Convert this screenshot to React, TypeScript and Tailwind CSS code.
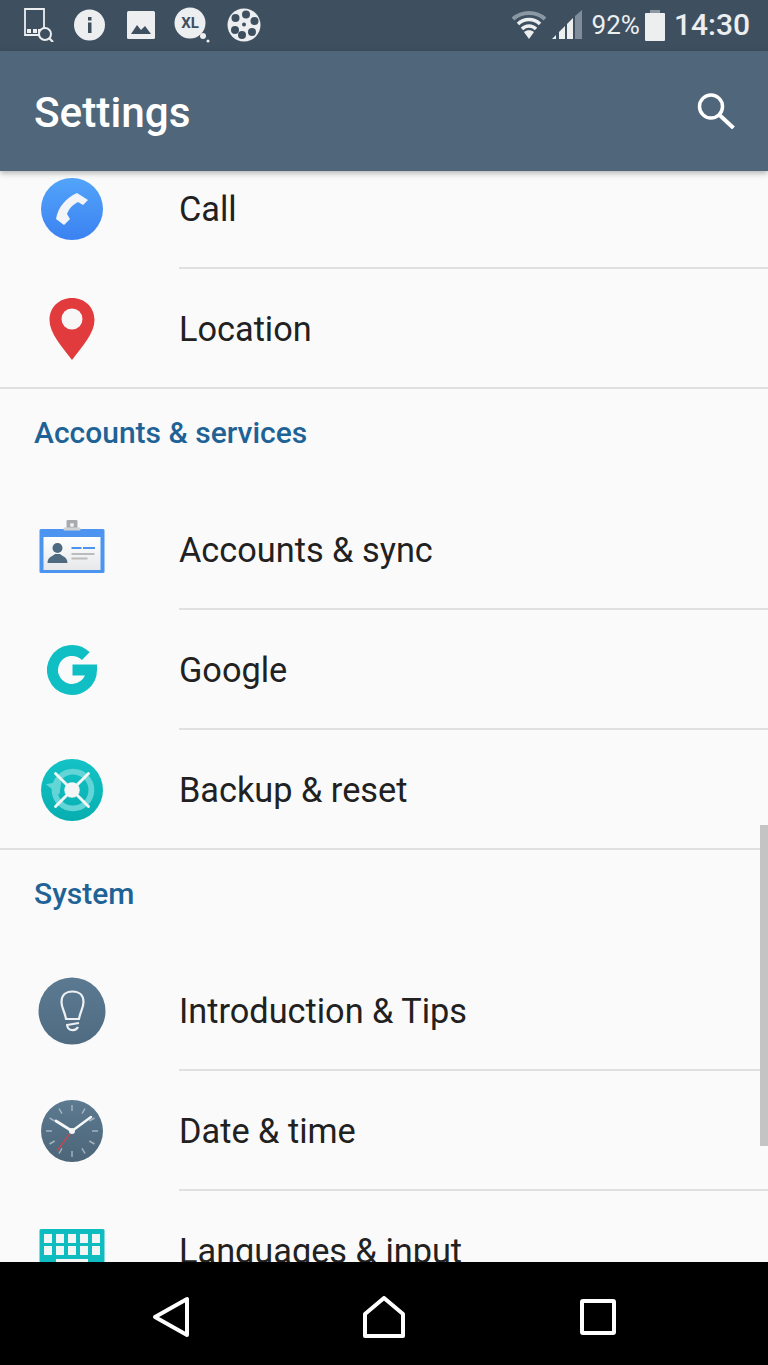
import React from "react";
import { ReactNode } from "react";

function Row({ icon, label, divider = true }: { icon: ReactNode; label: string; divider?: boolean }) {
  return (
    <div className="flex h-[120px] items-stretch">
      <div className="flex w-[144px] shrink-0 items-center justify-center">{icon}</div>
      <div
        className={
          divider
            ? "ml-[35px] flex flex-1 items-center border-b-2 border-[#e0e0e0] pt-[4px] text-[34.3px] text-[#212121]"
            : "ml-[35px] flex flex-1 items-center pt-[2px] text-[34.3px] text-[#212121]"
        }
      >
        {label}
      </div>
    </div>
  );
}

function SectionHeader({ title }: { title: string }) {
  return (
    <div className="-mt-[2px] h-[103px] border-t-2 border-[#e0e0e0] pl-[34px] pt-[26px] text-[30px] leading-[36px] font-medium text-[#1f6396]">
      {title}
    </div>
  );
}

const CallIcon = () => (
  <svg width="62" height="62" viewBox="0 0 62 62">
    <defs>
      <linearGradient id="call" x1="0" y1="0" x2="0" y2="1">
        <stop offset="0" stopColor="#52a4f9" />
        <stop offset="1" stopColor="#3b82f2" />
      </linearGradient>
    </defs>
    <circle cx="31" cy="31" r="31" fill="url(#call)" />
    <path d="M36 15 L47 22 L42 27 L37 24 C31 27 28 31 26 36 L29 41 L23 47 L15 41 C17 29 25 20 36 15 Z" fill="#f2f4f7" />
  </svg>
);

const PinIcon = () => (
  <svg width="46" height="64" viewBox="0 0 46 64">
    <path d="M23 1 C10 1 0.500 10.500 0.500 23 C0.500 36 13 50 23 63 C33 50 45.500 36 45.500 23 C45.500 10.500 36 1 23 1 Z" fill="#e23b3d" />
    <circle cx="23" cy="22" r="10.500" fill="#f7f7f7" />
  </svg>
);

const AccountsIcon = () => (
  <svg className="-mt-[6px]" width="66" height="54" viewBox="0 0 66 54">
    <defs>
      <linearGradient id="card" x1="0" y1="0" x2="0" y2="1">
        <stop offset="0" stopColor="#ffffff" />
        <stop offset="1" stopColor="#e6e8ea" />
      </linearGradient>
    </defs>
    <rect x="27.500" y="0" width="11" height="13" rx="1" fill="#a8abae" />
    <circle cx="33" cy="5" r="2" fill="#eeeeee" />
    <rect x="0.500" y="9" width="65" height="44" rx="1.500" fill="#4d94f0" />
    <rect x="24.500" y="7.500" width="17" height="3" rx="1" fill="#d0d3d6" />
    <rect x="4.500" y="17" width="57" height="33" fill="url(#card)" />
    <circle cx="18.500" cy="28" r="5" fill="#4e6a80" />
    <path d="M8.500 43 C8.500 37 14 36 16 34 L21 34 C23 36 28.500 37 28.500 43 Z" fill="#4e6a80" />
    <rect x="32.500" y="27" width="10" height="2" fill="#4d94f0" />
    <rect x="44" y="27" width="12" height="2" fill="#4d94f0" />
    <rect x="32.500" y="33" width="23" height="2" fill="#bcbcbc" />
    <rect x="32.500" y="37.500" width="16" height="2" fill="#bcbcbc" />
  </svg>
);

const GoogleIcon = () => (
  <svg width="50" height="52" viewBox="0 0 50 52">
    <path d="M38.800 12.200 A19.500 19.500 0 1 0 44.500 26 L25.500 26" fill="none" stroke="#10bfc4" strokeWidth="11" />
  </svg>
);

const BackupIcon = () => (
  <svg width="62" height="62" viewBox="0 0 64 64">
    <defs>
      <linearGradient id="backup" x1="0" y1="0" x2="0" y2="1">
        <stop offset="0" stopColor="#14c3c6" />
        <stop offset="1" stopColor="#07aeb0" />
      </linearGradient>
    </defs>
    <circle cx="32" cy="32" r="32" fill="url(#backup)" />
    <circle cx="33" cy="32" r="19" fill="none" stroke="#63d5d6" strokeWidth="6" />
    <path d="M5 26 L21 23 L19 37 Z" fill="#63d5d6" />
    <path d="M15 15 L49 49 M49 15 L15 49" stroke="#f4f6f6" strokeWidth="3" strokeLinecap="round" />
    <circle cx="32" cy="32" r="8" fill="#f4f6f6" />
  </svg>
);

const TipsIcon = () => (
  <svg width="68" height="68" viewBox="0 0 68 68">
    <defs>
      <linearGradient id="tips" x1="0" y1="0" x2="0" y2="1">
        <stop offset="0" stopColor="#5b7a91" />
        <stop offset="1" stopColor="#4f6b82" />
      </linearGradient>
    </defs>
    <circle cx="34" cy="34" r="33.500" fill="url(#tips)" />
    <path
      d="M28 42 C27 35 23.500 31 23.500 25 C23.500 18 28 14.500 34.500 14.500 C41 14.500 45.500 18 45.500 25 C45.500 31 42 35 41 42 Z M41 46 L29 48 L30 51 C32 54 38 54 40 50"
      fill="none"
      stroke="#eef1f3"
      strokeWidth="2.200"
      strokeLinejoin="round"
    />
  </svg>
);

const ClockIcon = () => (
  <svg width="62" height="62" viewBox="0 0 62 62">
    <defs>
      <linearGradient id="clock" x1="0" y1="0" x2="0" y2="1">
        <stop offset="0" stopColor="#5c7a90" />
        <stop offset="1" stopColor="#4c6579" />
      </linearGradient>
    </defs>
    <circle cx="31" cy="31" r="31" fill="url(#clock)" />
    <g stroke="#a3b3bf" strokeWidth="1.500">
      <path d="M31 5 L31 11 M31 51 L31 57 M5 31 L11 31 M51 31 L57 31" />
      <path d="M44 8.500 L41 13.700 M18 8.500 L21 13.700 M44 53.500 L41 48.300 M18 53.500 L21 48.300" />
      <path d="M53.500 18 L48.300 21 M8.500 18 L13.700 21 M53.500 44 L48.300 41 M8.500 44 L13.700 41" />
    </g>
    <path d="M31 31 L16 51" stroke="#e53d42" strokeWidth="1.200" />
    <path d="M31 31 L15 21" stroke="#f5f7f8" strokeWidth="2.800" strokeLinecap="round" />
    <path d="M31 31 L50 17" stroke="#f5f7f8" strokeWidth="2.400" strokeLinecap="round" />
    <circle cx="31" cy="31" r="3" fill="#f5f7f8" />
  </svg>
);

const KeyboardIcon = () => (
  <svg width="66" height="44" viewBox="0 0 66 44">
    <rect x="0.500" y="0" width="65" height="44" rx="1.500" fill="#0fbcbf" />
    {[5, 17, 29, 41, 53].map((x) => (
      <g key={x}>
        <rect x={x} y="5" width="8" height="9" fill="#f4f6f6" />
        <rect x={x} y="17" width="8" height="9" fill="#f4f6f6" />
      </g>
    ))}
    <rect x="17" y="30" width="32" height="8" fill="#f4f6f6" />
  </svg>
);

function StatusBar() {
  return (
    <div className="flex h-[51px] shrink-0 items-center bg-[#3e5060] pb-[1px] text-[#eceef0]">
      <svg className="ml-[24px]" width="30" height="34" viewBox="0 0 30 34">
        <path d="M1 1 H20 V27 H1 Z" fill="none" stroke="#eceef0" strokeWidth="1.800" />
        <path d="M3 21 h4 v4 h-4 Z M9 21 h4 v4 h-4 Z M14 21 h3 v4 h-3 Z" fill="#eceef0" />
        <circle cx="21" cy="26" r="6" fill="#3e5060" stroke="#eceef0" strokeWidth="2" />
        <path d="M25 30 L29 34" stroke="#eceef0" strokeWidth="2.200" />
      </svg>
      <svg className="ml-[20px]" width="31" height="32" viewBox="0 0 31 32">
        <circle cx="15.500" cy="16" r="15.500" fill="#eceef0" />
        <rect x="14" y="8" width="3.500" height="3.500" fill="#3e5060" />
        <rect x="14" y="13.500" width="3.500" height="10.500" fill="#3e5060" />
      </svg>
      <svg className="ml-[22px]" width="28" height="28" viewBox="0 0 28 28">
        <rect width="28" height="28" rx="1.500" fill="#eceef0" />
        <path d="M4 23 L10 14 L14 19 L18 15 L24 23 Z" fill="#3e5060" />
      </svg>
      <svg className="ml-[19px]" width="37" height="37" viewBox="0 0 37 37">
        <circle cx="16" cy="16" r="15.500" fill="#eceef0" />
        <circle cx="29" cy="29" r="3" fill="#eceef0" />
        <circle cx="34" cy="34" r="1.500" fill="#eceef0" />
        <text x="16" y="21" textAnchor="middle" fontFamily="Roboto, sans-serif" fontWeight="700" fontSize="15" fill="#3e5060">
          XL
        </text>
      </svg>
      <svg className="ml-[16px]" width="34" height="34" viewBox="0 0 34 34">
        <circle cx="17" cy="17" r="16.500" fill="#eceef0" />
        <g fill="#3e5060">
          <circle cx="19" cy="6.500" r="4" />
          <circle cx="8.500" cy="10" r="4" />
          <circle cx="27.500" cy="13" r="4" />
          <circle cx="8" cy="22" r="4" />
          <circle cx="25" cy="24" r="4" />
          <circle cx="15" cy="27" r="4" />
          <circle cx="17" cy="16.500" r="2" />
        </g>
      </svg>
      <div className="flex-1" />
      <svg width="36" height="30" viewBox="0 0 36 30">
        <path d="M2 9 C11 1 25 1 34 9" fill="none" stroke="#8b98a3" strokeWidth="4" />
        <path d="M7 14 C13 8 23 8 29 14" fill="none" stroke="#eceef0" strokeWidth="3.500" />
        <path d="M11 19 C15 15 21 15 25 19" fill="none" stroke="#eceef0" strokeWidth="3.500" />
        <path d="M13 22 C16 19.500 20 19.500 23 22 L18 29 Z" fill="#eceef0" />
      </svg>
      <svg className="ml-[5px]" width="30" height="30" viewBox="0 0 30 30">
        <path d="M4 25 V29 H0 Z" fill="#eceef0" />
        <path d="M7 22 L13 16 V29 H7 Z" fill="#eceef0" />
        <path d="M15 14 L21 8 V29 H15 Z" fill="#eceef0" />
        <path d="M23 6 L30 0 V29 H23 Z" fill="#7f8e9a" />
      </svg>
      <span className="ml-[10px] text-[26px] leading-none">92%</span>
      <svg className="ml-[5px]" width="20" height="31" viewBox="0 0 20 31">
        <rect x="5" y="0" width="10" height="4" fill="#8b98a3" />
        <rect x="0" y="3" width="20" height="28" rx="1" fill="#eceef0" />
      </svg>
      <span className="ml-[9px] mr-[18px] text-[30px] leading-none font-medium">14:30</span>
    </div>
  );
}

function Toolbar() {
  return (
    <div className="relative z-10 flex h-[120px] shrink-0 items-center justify-between bg-[#50677b] pr-[33px] pl-[34px] shadow-[0_2px_6px_rgba(0,0,0,0.3)]">
      <div className="mt-[3px] text-[42.3px] font-medium text-white">Settings</div>
      <svg className="-mt-[2px]" width="38" height="38" viewBox="0 0 38 38">
        <circle cx="14" cy="15.500" r="11.500" fill="none" stroke="#ffffff" strokeWidth="3.500" />
        <path d="M23 24.500 L36.500 37" stroke="#ffffff" strokeWidth="4" />
      </svg>
    </div>
  );
}

function NavBar() {
  return (
    <div className="flex h-[103px] shrink-0 items-center bg-black pt-[7px]">
      <svg className="ml-[152px]" width="38" height="42" viewBox="0 0 38 42">
        <path d="M3 21 L35 3 V39 Z" fill="none" stroke="#ffffff" strokeWidth="4" strokeLinejoin="round" />
      </svg>
      <svg className="ml-[173px]" width="42" height="42" viewBox="0 0 42 42">
        <path d="M2 18 L21 2 L40 18 V40 H2 Z" fill="none" stroke="#ffffff" strokeWidth="4" strokeLinejoin="round" />
      </svg>
      <svg className="ml-[175px]" width="36" height="36" viewBox="0 0 36 36">
        <rect x="2" y="2" width="32" height="32" rx="1" fill="none" stroke="#ffffff" strokeWidth="4" />
      </svg>
    </div>
  );
}

export default function App() {
  return (
    <div className="flex h-[1365px] w-[768px] flex-col overflow-hidden bg-[#fafafa] font-['Roboto',sans-serif]">
      <StatusBar />
      <Toolbar />
      <div className="relative flex-1 overflow-hidden">
        <div className="-mt-[22px]">
          <Row icon={<CallIcon />} label="Call" />
          <Row icon={<PinIcon />} label="Location" divider={false} />
          <SectionHeader title="Accounts & services" />
          <Row icon={<AccountsIcon />} label="Accounts & sync" />
          <Row icon={<GoogleIcon />} label="Google" />
          <Row icon={<BackupIcon />} label="Backup & reset" divider={false} />
          <SectionHeader title="System" />
          <Row icon={<TipsIcon />} label="Introduction & Tips" />
          <Row icon={<ClockIcon />} label="Date & time" />
          <Row icon={<KeyboardIcon />} label="Languages & input" />
        </div>
        {/* scrollbar thumb */}
        <div className="absolute top-[654px] right-0 h-[321px] w-2 bg-[#c4c4c4]" />
      </div>
      <NavBar />
    </div>
  );
}
